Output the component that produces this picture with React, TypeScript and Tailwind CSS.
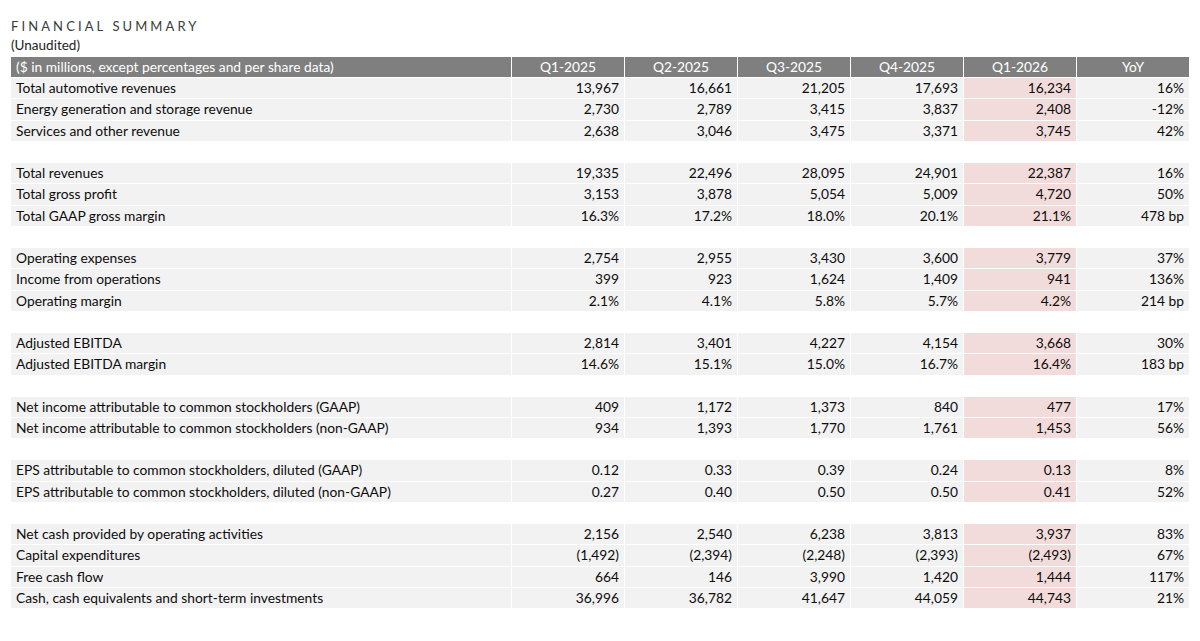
import React from 'react';

type Row = { label: string; values: string[]; yoy: string } | null;

const rows: Row[] = [
  { label: 'Total automotive revenues', values: ['13,967', '16,661', '21,205', '17,693', '16,234'], yoy: '16%' },
  { label: 'Energy generation and storage revenue', values: ['2,730', '2,789', '3,415', '3,837', '2,408'], yoy: '-12%' },
  { label: 'Services and other revenue', values: ['2,638', '3,046', '3,475', '3,371', '3,745'], yoy: '42%' },
  null,
  { label: 'Total revenues', values: ['19,335', '22,496', '28,095', '24,901', '22,387'], yoy: '16%' },
  { label: 'Total gross profit', values: ['3,153', '3,878', '5,054', '5,009', '4,720'], yoy: '50%' },
  { label: 'Total GAAP gross margin', values: ['16.3%', '17.2%', '18.0%', '20.1%', '21.1%'], yoy: '478 bp' },
  null,
  { label: 'Operating expenses', values: ['2,754', '2,955', '3,430', '3,600', '3,779'], yoy: '37%' },
  { label: 'Income from operations', values: ['399', '923', '1,624', '1,409', '941'], yoy: '136%' },
  { label: 'Operating margin', values: ['2.1%', '4.1%', '5.8%', '5.7%', '4.2%'], yoy: '214 bp' },
  null,
  { label: 'Adjusted EBITDA', values: ['2,814', '3,401', '4,227', '4,154', '3,668'], yoy: '30%' },
  { label: 'Adjusted EBITDA margin', values: ['14.6%', '15.1%', '15.0%', '16.7%', '16.4%'], yoy: '183 bp' },
  null,
  { label: 'Net income attributable to common stockholders (GAAP)', values: ['409', '1,172', '1,373', '840', '477'], yoy: '17%' },
  { label: 'Net income attributable to common stockholders (non-GAAP)', values: ['934', '1,393', '1,770', '1,761', '1,453'], yoy: '56%' },
  null,
  { label: 'EPS attributable to common stockholders, diluted (GAAP)', values: ['0.12', '0.33', '0.39', '0.24', '0.13'], yoy: '8%' },
  { label: 'EPS attributable to common stockholders, diluted (non-GAAP)', values: ['0.27', '0.40', '0.50', '0.50', '0.41'], yoy: '52%' },
  null,
  { label: 'Net cash provided by operating activities', values: ['2,156', '2,540', '6,238', '3,813', '3,937'], yoy: '83%' },
  { label: 'Capital expenditures', values: ['(1,492)', '(2,394)', '(2,248)', '(2,393)', '(2,493)'], yoy: '67%' },
  { label: 'Free cash flow', values: ['664', '146', '3,990', '1,420', '1,444'], yoy: '117%' },
  { label: 'Cash, cash equivalents and short-term investments', values: ['36,996', '36,782', '41,647', '44,059', '44,743'], yoy: '21%' },
];

const quarters = ['Q1-2025', 'Q2-2025', 'Q3-2025', 'Q4-2025', 'Q1-2026', 'YoY'];

const grid = 'grid grid-cols-[500px_repeat(6,112px)] gap-x-px';

export default function App() {
  return (
    <div className="min-h-[641px] bg-white pl-[11px] pt-[16px] text-[13.8px] text-[#0d0d0d] font-['Lato','Open_Sans',sans-serif]">
      <div className="text-[13px] tracking-[3.1px] text-[#3a3a3a] leading-[20px]">FINANCIAL SUMMARY</div>
      <div className="text-[13.5px] text-[#222] leading-[20px] mt-[-1px]">(Unaudited)</div>

      <div className="mt-[2px] flex flex-col gap-y-px">
        <div className={`${grid} h-[20.24px] bg-white text-white`}>
          <div className="bg-[#7f7f7f] pl-[5px] leading-[20.24px]">($ in millions, except percentages and per share data)</div>
          {quarters.map((q) => (
            <div key={q} className="bg-[#7f7f7f] text-center leading-[20.24px]">{q}</div>
          ))}
        </div>

        {rows.map((r, i) =>
          r === null ? (
            <div key={i} className="h-[20.24px]" />
          ) : (
            <div key={i} className={`${grid} h-[20.24px]`}>
              <div className="bg-[#f2f2f2] pl-[5px] leading-[20.24px] whitespace-nowrap">{r.label}</div>
              {r.values.map((v, j) => (
                <div
                  key={j}
                  className={`${j === 4 ? 'bg-[#f2dcdb]' : 'bg-[#f2f2f2]'} pr-[5px] text-right leading-[20.24px]`}
                >
                  {v}
                </div>
              ))}
              <div className="bg-[#f2f2f2] pr-[5px] text-right leading-[20.24px]">{r.yoy}</div>
            </div>
          )
        )}
      </div>
    </div>
  );
}
